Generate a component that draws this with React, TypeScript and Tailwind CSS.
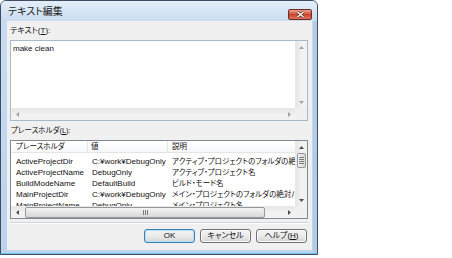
import React from 'react';

type Dir = 'u' | 'd' | 'l' | 'r';

const Tri = ({ d, c = '#4d4d4d' }: { d: Dir; c?: string }) => {
    const vert = d === 'u' || d === 'd';
    const pts = { u: '0,3 2.5,0 5,3', d: '0,0 2.5,3 5,0', l: '3,0 0,2.5 3,5', r: '0,0 3,2.5 0,5' }[d];
    return (
        <svg width={vert ? 5 : 3} height={vert ? 3 : 5} viewBox={vert ? '0 0 5 3' : '0 0 3 5'}>
            <polygon points={pts} fill={c} />
        </svg>
    );
};

const VScroll = ({ active }: { active?: boolean }) => (
    <div className="w-[12px] flex flex-col bg-gradient-to-r from-[#e6e6e6] via-[#f2f2f2] to-[#f2f2f2] border-l border-[#e8e8e8]">
        <div className="h-[12px] flex items-center justify-center">
            <Tri d="u" c={active ? '#4d4d4d' : '#a3a3a3'} />
        </div>
        {active && (
            <div className="mx-[1px] h-[15px] rounded-[2px] border border-[#979797] bg-gradient-to-r from-[#f3f3f3] to-[#d8d8d8] flex flex-col items-center justify-center gap-[1px]">
                <div className="w-[5px] h-px bg-[#7a7a7a]" />
                <div className="w-[5px] h-px bg-[#7a7a7a]" />
                <div className="w-[5px] h-px bg-[#7a7a7a]" />
                <div className="w-[5px] h-px bg-[#7a7a7a]" />
            </div>
        )}
        <div className="flex-1" />
        <div className="h-[12px] flex items-center justify-center">
            <Tri d="d" c={active ? '#4d4d4d' : '#a3a3a3'} />
        </div>
    </div>
);

const HScroll = ({ active }: { active?: boolean }) => (
    <div className="h-[12px] flex-1 flex bg-gradient-to-b from-[#e6e6e6] via-[#f2f2f2] to-[#f2f2f2] border-t border-[#e8e8e8]">
        <div className="w-[12px] flex items-center justify-center">
            <Tri d="l" c={active ? '#4d4d4d' : '#a3a3a3'} />
        </div>
        <div className="flex-1 flex items-center px-[2px]">
            {active && (
                <div className="h-[11px] w-[240px] rounded-[2px] border border-[#979797] bg-gradient-to-b from-[#f3f3f3] to-[#d8d8d8] flex items-center justify-center gap-[1px]">
                    <div className="h-[5px] w-px bg-[#7a7a7a]" />
                    <div className="h-[5px] w-px bg-[#7a7a7a]" />
                    <div className="h-[5px] w-px bg-[#7a7a7a]" />
                </div>
            )}
        </div>
        <div className="w-[12px] flex items-center justify-center">
            <Tri d="r" c={active ? '#4d4d4d' : '#a3a3a3'} />
        </div>
    </div>
);

const rows = [
    ['ActiveProjectDir', 'C:¥work¥DebugOnly', 'アクティブ・プロジェクトのフォルダの絶対パス'],
    ['ActiveProjectName', 'DebugOnly', 'アクティブ・プロジェクト名'],
    ['BuildModeName', 'DefaultBuild', 'ビルド・モード名'],
    ['MainProjectDir', 'C:¥work¥DebugOnly', 'メイン・プロジェクトのフォルダの絶対パス'],
    ['MainProjectName', 'DebugOnly', 'メイン・プロジェクト名'],
];

const Btn = ({ children, primary }: { children: React.ReactNode; primary?: boolean }) => (
    <div
        className={
            primary
                ? 'w-[51px] h-[14px] rounded-[3px] border border-[#3c7fb1] bg-gradient-to-b from-[#f2f2f2] via-[#ebebeb] to-[#d6d6d6] shadow-[inset_0_0_0_1px_#b4e0f7] flex items-center justify-center'
                : 'w-[51px] h-[14px] rounded-[3px] border border-[#707070] bg-gradient-to-b from-[#f2f2f2] via-[#ebebeb] to-[#d3d3d3] shadow-[inset_0_0_0_1px_#fbfbfb] flex items-center justify-center'
        }
    >
        <span className="leading-none">{children}</span>
    </div>
);

export default function App() {
    return (
        <div className="w-[452px] h-[258px] bg-white font-['Liberation_Sans','Noto_Sans_CJK_JP',sans-serif] text-[8px] text-[#111] [font-feature-settings:'palt']">
            <div className="w-[318px] h-[255px] rounded-t-[6px] border border-[#3d4e62] bg-gradient-to-b from-[#cadcf1] to-[#bcd3ec] shadow-[inset_0_-1px_0_#6cc8ea,inset_-4px_0_0_#b1cbe8] flex flex-col">
                {/* title bar */}
                <div className="h-[20px] flex items-start rounded-t-[5px] bg-gradient-to-b from-[#e4eef9] to-[#cadcf1]">
                    <span className="mt-[5px] ml-[7px] text-[10px] leading-[12px] text-[#1b1b1b]">テキスト編集</span>
                    <div className="flex-1" />
                    <div className="mt-[8px] mr-[5px] w-[24px] h-[11px] rounded-[2px] border border-[#6e2a22] bg-gradient-to-b from-[#e9a594] via-[#c9452f] to-[#d8735a] flex items-center justify-center">
                        <svg width="9" height="7" viewBox="0 0 9 7">
                            <path d="M1.5 1 L7.5 6 M7.5 1 L1.5 6" stroke="#5a2a22" strokeWidth="2.6" />
                            <path d="M1.5 1 L7.5 6 M7.5 1 L1.5 6" stroke="#ffffff" strokeWidth="1.4" />
                        </svg>
                    </div>
                </div>

                {/* client area */}
                <div className="ml-[6px] mr-[5px] mb-[4px] flex-1 bg-[#f0f0f0] flex flex-col">
                    <div className="mt-[4px] pl-[3px] h-[11px] leading-[11px]">
                        テキスト(<span className="underline">T</span>):
                    </div>
                    <div className="mt-[4px] ml-[3px] mr-[4px] h-[81px] border border-[#a9b9cc] bg-white flex flex-col">
                        <div className="flex-1 flex">
                            <div className="flex-1 pl-[2px] pt-[2px] leading-[11px]">make clean</div>
                            <VScroll />
                        </div>
                        <div className="flex">
                            <HScroll />
                            <div className="w-[12px] h-[12px] bg-[#f0f0f0]" />
                        </div>
                    </div>

                    <div className="mt-[4px] pl-[4px] h-[11px] leading-[11px] text-[7.5px]">
                        プレースホルダ(<span className="underline">L</span>):
                    </div>
                    <div className="mt-[4px] ml-[3px] mr-[4px] h-[79px] border border-[#828790] bg-white flex flex-col">
                        <div className="flex-1 flex min-h-0">
                            <div className="flex-1 overflow-hidden">
                                <div className="grid grid-cols-[77px_80px_1fr] h-[12px] border-b border-[#e5e5e5] bg-gradient-to-b from-white to-[#f7f8fa] text-[7.5px]">
                                    <div className="pl-[5px] leading-[12px] border-r border-[#e5e5e5]">プレースホルダ</div>
                                    <div className="pl-[3px] leading-[12px] border-r border-[#e5e5e5]">値</div>
                                    <div className="pl-[4px] leading-[12px]">説明</div>
                                </div>
                                <div className="pt-[3px]">
                                    {rows.map((r) => (
                                        <div key={r[0]} className="grid grid-cols-[77px_80px_1fr] h-[11px] leading-[11px] whitespace-nowrap">
                                            <div className="pl-[5px] overflow-hidden">{r[0]}</div>
                                            <div className="pl-[4px] overflow-hidden">{r[1]}</div>
                                            <div className="pl-[4px] overflow-hidden text-[7.5px]">{r[2]}</div>
                                        </div>
                                    ))}
                                </div>
                            </div>
                            <VScroll active />
                        </div>
                        <div className="flex">
                            <HScroll active />
                            <div className="w-[12px] h-[12px] bg-[#f0f0f0]" />
                        </div>
                    </div>

                    <div className="mt-[3px] ml-[3px] mr-[4px] h-[2px] border-t border-[#d5d5d5] border-b border-b-white" />

                    <div className="mt-[5px] pr-[5px] flex justify-end gap-[5px]">
                        <Btn primary>OK</Btn>
                        <Btn>キャンセル</Btn>
                        <Btn>
                            ヘルプ(<span className="underline">H</span>)
                        </Btn>
                    </div>
                </div>
            </div>
        </div>
    );
}
